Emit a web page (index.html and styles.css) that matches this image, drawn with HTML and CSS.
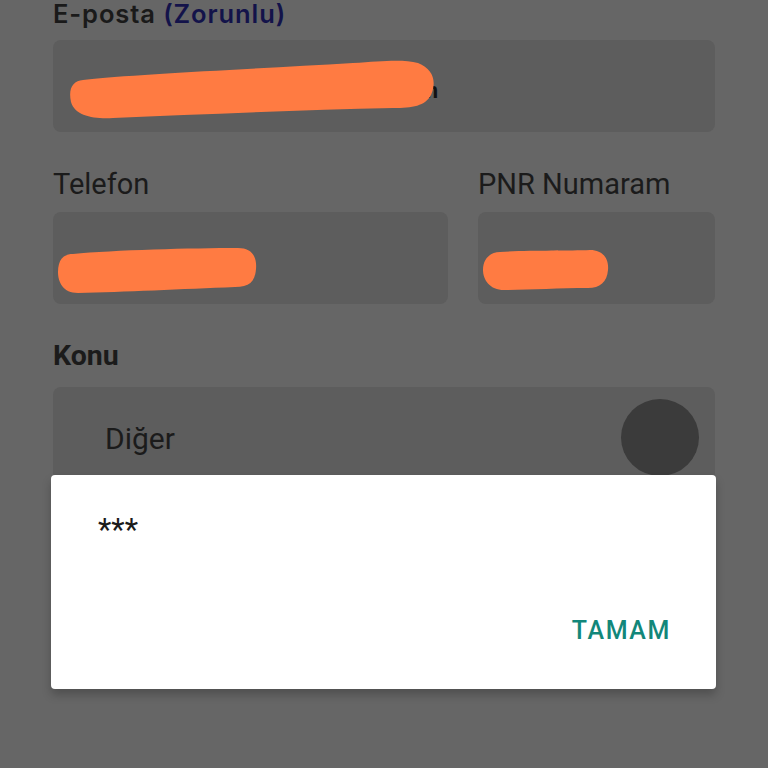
FILE: index.html
```html
<!DOCTYPE html>
<html lang="tr">
<head>
<meta charset="utf-8">
<link rel="stylesheet" href="styles.css">
</head>
<body>
<div class="page">
  <div class="group first">
    <div class="label label-geo">E-posta <span class="req">(Zorunlu)</span></div>
    <div class="field field-email">
      <span class="value">xxxxxxxxxxxxxxxxxxxxxxxxxn</span>
      <svg class="scribble" width="400" height="92" viewBox="0 0 400 92">
        <path d="M30 40 C 80 34, 200 29, 300 23 C 330 21, 350 19, 365 23 C 380 29, 384 41, 378 55 C 372 66, 360 68, 340 68 C 250 70, 150 74, 60 78 C 40 79, 22 76, 18 62 C 15 48, 20 41, 30 40 Z" fill="#ff7b42"/>
      </svg>
    </div>
  </div>
  <div class="row">
    <div class="group">
      <div class="label">Telefon</div>
      <div class="field">
        <svg class="scribble" width="220" height="92" viewBox="0 0 220 92">
          <path d="M20 42 C 60 38, 140 36, 185 36 C 200 36, 204 46, 203 57 C 202 70, 196 75, 182 75 C 130 77, 70 80, 25 81 C 10 81, 5 70, 5 60 C 5 48, 10 42, 20 42 Z" fill="#ff7b42"/>
        </svg>
      </div>
    </div>
    <div class="group">
      <div class="label">PNR Numaram</div>
      <div class="field">
        <svg class="scribble" width="150" height="92" viewBox="0 0 150 92">
          <path d="M22 40 C 50 38, 90 39, 112 38 C 126 38, 131 48, 130 58 C 129 70, 122 76, 110 76 C 80 76, 50 78, 26 78 C 12 78, 5 68, 5 58 C 5 47, 12 40, 22 40 Z" fill="#ff7b42"/>
        </svg>
      </div>
    </div>
  </div>
  <div class="group">
    <div class="label label-bold">Konu</div>
    <div class="field field-select">
      <span class="select-value">Diğer</span>
      <span class="knob"></span>
    </div>
  </div>
</div>

<div class="dialog">
  <div class="dialog-message">***</div>
  <div class="dialog-actions">
    <span class="dialog-button">TAMAM</span>
  </div>
</div>
</body>
</html>
```

FILE: styles.css
```css
html, body {
  margin: 0;
  padding: 0;
  background: #666666;
  width: 768px;
  height: 768px;
  overflow: hidden;
}

.page {
  padding: 0 53px 0 53px;
  font-family: Roboto, "Noto Sans", sans-serif;
  color: #1b1b1b;
}

.group {
  margin-top: 35px;
}

.group.first {
  margin-top: 0;
}

.label {
  font-size: 29px;
  line-height: 34px;
  height: 34px;
  margin-bottom: 11px;
  white-space: nowrap;
}

.label-geo {
  font-family: Inter, Lato, "Noto Sans", sans-serif;
  font-weight: 600;
  font-size: 25.5px;
  letter-spacing: 0.9px;
  line-height: 28px;
  height: 28px;
  margin-bottom: 12px;
  color: #1a1a1a;
}

.req {
  color: #13134a;
}

.label-bold {
  font-weight: 700;
  font-size: 28.5px;
  margin-bottom: 14px;
}

.field {
  position: relative;
  height: 92px;
  background: #5d5d5d;
  border-radius: 8px;
  overflow: hidden;
}

.field-email .value {
  position: absolute;
  left: 20px;
  top: 38px;
  width: 365px;
  font-size: 22px;
  line-height: 26px;
  font-weight: 700;
  color: #121212;
  white-space: nowrap;
  overflow: hidden;
  text-align: right;
}

.scribble {
  position: absolute;
  left: 0;
  top: 0;
}

.row {
  display: grid;
  grid-template-columns: 395px 237px;
  column-gap: 30px;
}

.field-select {
  height: 110px;
  display: flex;
  align-items: center;
  justify-content: space-between;
  padding: 0 16px 0 52px;
  overflow: visible;
}

.select-value {
  font-size: 30px;
  color: #1b1b1b;
  margin-top: -8px;
}

.knob {
  width: 78px;
  height: 77px;
  border-radius: 50%;
  background: #3b3b3b;
  margin-top: -10px;
}

.dialog {
  position: absolute;
  left: 51px;
  top: 475px;
  width: 665px;
  height: 214px;
  background: #ffffff;
  border-radius: 4px;
  box-shadow: 0 6px 10px rgba(0,0,0,0.22);
  display: flex;
  flex-direction: column;
  justify-content: space-between;
  font-family: Roboto, "Noto Sans", sans-serif;
}

.dialog-message {
  padding: 38px 0 0 47px;
  font-size: 31px;
  line-height: 34px;
  color: #1b1b1b;
}

.dialog-actions {
  display: flex;
  justify-content: flex-end;
  padding: 0 45px 43px 0;
}

.dialog-button {
  font-size: 25px;
  font-weight: 500;
  color: #12877a;
  letter-spacing: 1.6px;
  line-height: 30px;
}
```
